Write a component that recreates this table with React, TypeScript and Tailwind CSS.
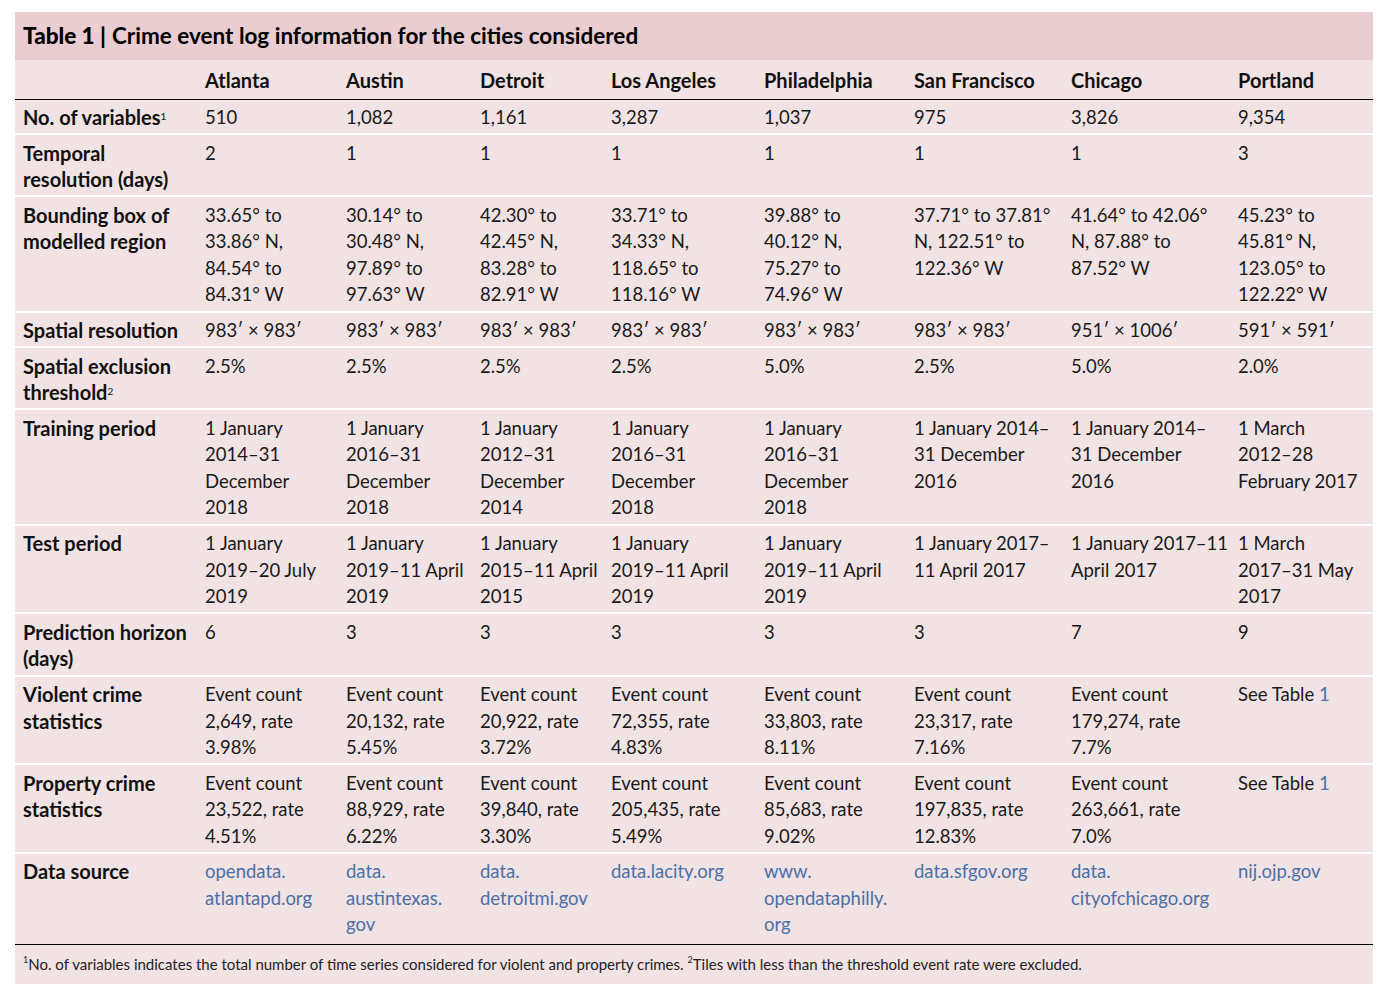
import React from "react";

type Cell = string[] | React.ReactNode;

interface Row {
  label: React.ReactNode[];
  cells: Cell[];
  link?: boolean;
}

const cities = [
  "Atlanta",
  "Austin",
  "Detroit",
  "Los Angeles",
  "Philadelphia",
  "San Francisco",
  "Chicago",
  "Portland",
];

const widths = [
  "w-[182px]",
  "w-[141px]",
  "w-[134px]",
  "w-[131px]",
  "w-[153px]",
  "w-[150px]",
  "w-[157px]",
  "w-[167px]",
  "w-[143px]",
];

const seeTable = (
  <>
    See Table <span className="text-[#4a70a8]">1</span>
  </>
);

const rows: Row[] = [
  {
    label: [
      <>
        No. of variables<sup className="text-[10px] font-normal">1</sup>
      </>,
    ],
    cells: [["510"], ["1,082"], ["1,161"], ["3,287"], ["1,037"], ["975"], ["3,826"], ["9,354"]],
  },
  {
    label: ["Temporal", "resolution (days)"],
    cells: [["2"], ["1"], ["1"], ["1"], ["1"], ["1"], ["1"], ["3"]],
  },
  {
    label: ["Bounding box of", "modelled region"],
    cells: [
      ["33.65° to", "33.86° N,", "84.54° to", "84.31° W"],
      ["30.14° to", "30.48° N,", "97.89° to", "97.63° W"],
      ["42.30° to", "42.45° N,", "83.28° to", "82.91° W"],
      ["33.71° to", "34.33° N,", "118.65° to", "118.16° W"],
      ["39.88° to", "40.12° N,", "75.27° to", "74.96° W"],
      ["37.71° to 37.81°", "N, 122.51° to", "122.36° W"],
      ["41.64° to 42.06°", "N, 87.88° to", "87.52° W"],
      ["45.23° to", "45.81° N,", "123.05° to", "122.22° W"],
    ],
  },
  {
    label: ["Spatial resolution"],
    cells: [
      ["983′ × 983′"],
      ["983′ × 983′"],
      ["983′ × 983′"],
      ["983′ × 983′"],
      ["983′ × 983′"],
      ["983′ × 983′"],
      ["951′ × 1006′"],
      ["591′ × 591′"],
    ],
  },
  {
    label: [
      "Spatial exclusion",
      <>
        threshold<sup className="text-[10px] font-normal">2</sup>
      </>,
    ],
    cells: [["2.5%"], ["2.5%"], ["2.5%"], ["2.5%"], ["5.0%"], ["2.5%"], ["5.0%"], ["2.0%"]],
  },
  {
    label: ["Training period"],
    cells: [
      ["1 January", "2014–31", "December", "2018"],
      ["1 January", "2016–31", "December", "2018"],
      ["1 January", "2012–31", "December", "2014"],
      ["1 January", "2016–31", "December", "2018"],
      ["1 January", "2016–31", "December", "2018"],
      ["1 January 2014–", "31 December", "2016"],
      ["1 January 2014–", "31 December", "2016"],
      ["1 March", "2012–28", "February 2017"],
    ],
  },
  {
    label: ["Test period"],
    cells: [
      ["1 January", "2019–20 July", "2019"],
      ["1 January", "2019–11 April", "2019"],
      ["1 January", "2015–11 April", "2015"],
      ["1 January", "2019–11 April", "2019"],
      ["1 January", "2019–11 April", "2019"],
      ["1 January 2017–", "11 April 2017"],
      ["1 January 2017–11", "April 2017"],
      ["1 March", "2017–31 May", "2017"],
    ],
  },
  {
    label: ["Prediction horizon", "(days)"],
    cells: [["6"], ["3"], ["3"], ["3"], ["3"], ["3"], ["7"], ["9"]],
  },
  {
    label: ["Violent crime", "statistics"],
    cells: [
      ["Event count", "2,649, rate", "3.98%"],
      ["Event count", "20,132, rate", "5.45%"],
      ["Event count", "20,922, rate", "3.72%"],
      ["Event count", "72,355, rate", "4.83%"],
      ["Event count", "33,803, rate", "8.11%"],
      ["Event count", "23,317, rate", "7.16%"],
      ["Event count", "179,274, rate", "7.7%"],
      seeTable,
    ],
  },
  {
    label: ["Property crime", "statistics"],
    cells: [
      ["Event count", "23,522, rate", "4.51%"],
      ["Event count", "88,929, rate", "6.22%"],
      ["Event count", "39,840, rate", "3.30%"],
      ["Event count", "205,435, rate", "5.49%"],
      ["Event count", "85,683, rate", "9.02%"],
      ["Event count", "197,835, rate", "12.83%"],
      ["Event count", "263,661, rate", "7.0%"],
      seeTable,
    ],
  },
  {
    label: ["Data source"],
    link: true,
    cells: [
      ["opendata.", "atlantapd.org"],
      ["data.", "austintexas.", "gov"],
      ["data.", "detroitmi.gov"],
      ["data.lacity.org"],
      ["www.", "opendataphilly.", "org"],
      ["data.sfgov.org"],
      ["data.", "cityofchicago.org"],
      ["nij.ojp.gov"],
    ],
  },
];

const Lines = ({ lines }: { lines: React.ReactNode[] }) => (
  <>
    {lines.map((l, i) => (
      <div key={i} className="whitespace-nowrap">
        {l}
      </div>
    ))}
  </>
);

export default function App() {
  return (
    <div
      className="bg-white min-h-[990px] pt-[12px] pl-[15px] text-[#111]"
      style={{ fontFamily: "Lato, 'Open Sans', sans-serif" }}
    >
      <div className="w-[1358px] bg-[#f1e2e3]">
        <div className="bg-[#e9cdd1] h-[48px] flex items-center px-[8px] text-[22.5px] font-bold text-black">
          <span className="font-black">Table 1 |</span>
          <span className="ml-[6px]">Crime event log information for the cities considered</span>
        </div>
        <table className="table-fixed border-collapse w-full text-[18.5px] leading-[26.5px]">
          <thead>
            <tr className="border-b-[1.5px] border-black">
              {["", ...cities].map((c, i) => (
                <th
                  key={i}
                  className={`${widths[i]} text-left font-bold text-[20px] px-[8px] h-[39px] pt-[1px] align-middle`}
                >
                  {c}
                </th>
              ))}
            </tr>
          </thead>
          <tbody>
            {rows.map((r, ri) => {
              const last = ri === rows.length - 1;
              const pad = last ? "pt-[4.5px] pb-[6px]" : "pt-[4.5px] pb-[2.7px]";
              return (
                <tr
                  key={ri}
                  className={last ? "border-b-[1.5px] border-black" : "border-b-2 border-white"}
                >
                  <td className={`align-top px-[8px] ${pad} font-bold text-[20px]`}>
                    <Lines lines={r.label} />
                  </td>
                  {r.cells.map((c, ci) => (
                    <td
                      key={ci}
                      className={`align-top px-[8px] ${pad} ${
                        r.link ? "text-[#4a70a8]" : "text-[#1a1a1a]"
                      }`}
                    >
                      {Array.isArray(c) ? <Lines lines={c} /> : c}
                    </td>
                  ))}
                </tr>
              );
            })}
          </tbody>
        </table>
        <div className="h-[39px] flex items-center px-[8px] text-[15px] text-[#222]">
          <sup className="text-[9px]">1</sup>
          No. of variables indicates the total number of time series considered for violent and property crimes.{" "}
          <sup className="text-[9px] ml-[4px]">2</sup>
          Tiles with less than the threshold event rate were excluded.
        </div>
      </div>
    </div>
  );
}
